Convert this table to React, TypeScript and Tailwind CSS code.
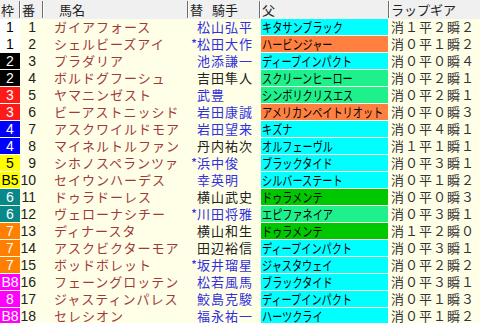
import React from "react";

type Row = {
  w: string;
  wc: string;
  n: number;
  name: string;
  mark: boolean;
  jockey: string;
  blue: boolean;
  sire: string;
  sc: string;
  lap: string;
};

const WHITE = "bg-white text-black";
const BLACK = "bg-black text-white";
const RED = "bg-[#ff1a1a] text-white";
const BLUE = "bg-[#0000ff] text-white";
const YEL = "bg-[#ffff00] text-black";
const TEAL = "bg-[#088888] text-white";
const ORG = "bg-[#ff8000] text-white";
const MAG = "bg-[#ff00ff] text-white";

const CY = "bg-[#00ffff]";
const OR = "bg-[#ff8040]";
const MINT = "bg-[#1ef08c]";
const GR = "bg-[#00c800]";

const rows: Row[] = [
  { w: "1", wc: WHITE, n: 1, name: "ガイアフォース", mark: false, jockey: "松山弘平", blue: true, sire: "キタサンブラック", sc: CY, lap: "消１平２瞬２" },
  { w: "1", wc: WHITE, n: 2, name: "シェルビーズアイ", mark: true, jockey: "松田大作", blue: true, sire: "ハービンジャー", sc: OR, lap: "消０平１瞬２" },
  { w: "2", wc: BLACK, n: 3, name: "プラダリア", mark: false, jockey: "池添謙一", blue: true, sire: "ディープインパクト", sc: CY, lap: "消０平０瞬４" },
  { w: "2", wc: BLACK, n: 4, name: "ボルドグフーシュ", mark: false, jockey: "吉田隼人", blue: false, sire: "スクリーンヒーロー", sc: MINT, lap: "消０平２瞬１" },
  { w: "3", wc: RED, n: 5, name: "ヤマニンゼスト", mark: false, jockey: "武豊", blue: true, sire: "シンボリクリスエス", sc: MINT, lap: "消０平２瞬１" },
  { w: "3", wc: RED, n: 6, name: "ビーアストニッシド", mark: false, jockey: "岩田康誠", blue: true, sire: "アメリカンペイトリオット", sc: OR, lap: "消０平０瞬３" },
  { w: "4", wc: BLUE, n: 7, name: "アスクワイルドモア", mark: false, jockey: "岩田望来", blue: true, sire: "キズナ", sc: CY, lap: "消０平４瞬１" },
  { w: "4", wc: BLUE, n: 8, name: "マイネルトルファン", mark: false, jockey: "丹内祐次", blue: false, sire: "オルフェーヴル", sc: CY, lap: "消１平１瞬１" },
  { w: "5", wc: YEL, n: 9, name: "シホノスペランツァ", mark: true, jockey: "浜中俊", blue: true, sire: "ブラックタイド", sc: CY, lap: "消０平３瞬１" },
  { w: "B5", wc: YEL, n: 10, name: "セイウンハーデス", mark: false, jockey: "幸英明", blue: true, sire: "シルバーステート", sc: CY, lap: "消０平１瞬２" },
  { w: "6", wc: TEAL, n: 11, name: "ドゥラドーレス", mark: false, jockey: "横山武史", blue: false, sire: "ドゥラメンテ", sc: GR, lap: "消０平０瞬３" },
  { w: "6", wc: TEAL, n: 12, name: "ヴェローナシチー", mark: true, jockey: "川田将雅", blue: true, sire: "エピファネイア", sc: MINT, lap: "消０平３瞬１" },
  { w: "7", wc: ORG, n: 13, name: "ディナースタ", mark: false, jockey: "横山和生", blue: false, sire: "ドゥラメンテ", sc: GR, lap: "消１平２瞬０" },
  { w: "7", wc: ORG, n: 14, name: "アスクビクターモア", mark: false, jockey: "田辺裕信", blue: false, sire: "ディープインパクト", sc: CY, lap: "消０平３瞬１" },
  { w: "7", wc: ORG, n: 15, name: "ボッドボレット", mark: true, jockey: "坂井瑠星", blue: true, sire: "ジャスタウェイ", sc: CY, lap: "消０平２瞬２" },
  { w: "B8", wc: MAG, n: 16, name: "フェーングロッテン", mark: false, jockey: "松若風馬", blue: true, sire: "ブラックタイド", sc: CY, lap: "消０平３瞬１" },
  { w: "8", wc: MAG, n: 17, name: "ジャスティンパレス", mark: false, jockey: "鮫島克駿", blue: true, sire: "ディープインパクト", sc: CY, lap: "消０平１瞬３" },
  { w: "B8", wc: MAG, n: 18, name: "セレシオン", mark: false, jockey: "福永祐一", blue: true, sire: "ハーツクライ", sc: CY, lap: "消０平１瞬２" },
];

const jp = "font-['Noto_Sans_CJK_JP',sans-serif]";

function Sep() {
  return <div className="w-[2px] h-[17px] self-center border-l border-[#6e6e6e] border-r border-r-white" />;
}

export default function App() {
  return (
    <div className={`w-[480px] h-[323px] overflow-hidden bg-[#ffffe8] ${jp}`}>
      {/* header */}
      <div className="flex h-[19px] bg-[#f0f0f0] text-[13px] leading-[19px] text-[#222]">
        <div className="w-[19px] pl-[1px]">枠</div>
        <Sep />
        <div className="w-[21px] pl-[1px]">番</div>
        <Sep />
        <div className="w-[143px] pl-[15px]">馬名</div>
        <Sep />
        <div className="w-[70px] pl-[1px] flex">
          <span>替</span>
          <span className="ml-[9px]">騎手</span>
        </div>
        <Sep />
        <div className="w-[127px] pl-[1px]">父</div>
        <Sep />
        <div className="flex-1 pl-[1px]">ラップギア</div>
      </div>
      {/* body */}
      {rows.map((r) => (
        <div key={r.n} className="flex h-[17px]">
          <div
            className={`w-[20px] h-[16px] ${r.wc} text-center text-[14px] leading-[16px] font-['Liberation_Sans',sans-serif]`}
          >
            {r.w}
          </div>
          <div className="w-[16px] text-right text-[14px] leading-[16px] text-[#222] font-['Liberation_Sans',sans-serif]">
            {r.n}
          </div>
          <div className="w-[18px]" />
          <div className="w-[134px] text-[13px] tracking-[1px] leading-[16px] text-[#a03a3a] whitespace-nowrap">
            {r.name}
          </div>
          <div
            className={`w-[72px] flex text-[13px] leading-[16px] tracking-[1px] whitespace-nowrap ${
              r.blue ? "text-[#3030e0]" : "text-[#222]"
            }`}
          >
            <span className="w-[9px] pl-[3px] text-right">{r.mark ? "*" : ""}</span>
            <span>{r.jockey}</span>
          </div>
          <div className="w-[1px]" />
          <div className={`w-[127px] h-[16px] ${r.sc} pl-[1px] overflow-hidden`}>
            <span className="inline-block align-top origin-left [scale:0.78_1] text-[13px] leading-[16px] text-black whitespace-nowrap">
              {r.sire}
            </span>
          </div>
          <div className="w-[3px]" />
          <div className="flex-1 text-[13px] tracking-[1px] leading-[16px] text-[#333] whitespace-nowrap">
            {r.lap}
          </div>
        </div>
      ))}
    </div>
  );
}
